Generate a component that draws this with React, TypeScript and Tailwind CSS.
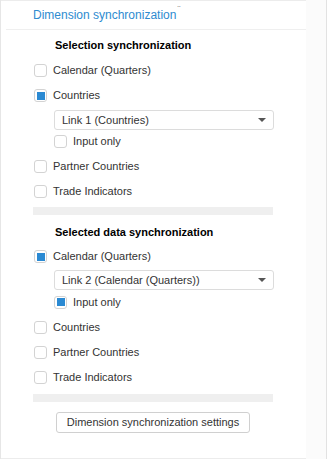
import React from "react";

const font = { fontFamily: '"Liberation Sans", Arial, sans-serif' };

function Box({ checked }: { checked?: boolean }) {
  return (
    <div className="w-[13px] h-[13px] shrink-0 rounded-[3px] border border-[#d3d3d3] bg-white flex items-center justify-center">
      {checked && <div className="w-[8px] h-[8px] bg-[#2b8ad3]" />}
    </div>
  );
}

function Row({ label, checked }: { label: string; checked?: boolean }) {
  return (
    <div className="h-[25px] flex items-center pl-[33px]">
      <Box checked={checked} />
      <span className="ml-[6px] text-[11px] text-[#333]">{label}</span>
    </div>
  );
}

function Select({ text }: { text: string }) {
  return (
    <div className="ml-[53px] w-[220px] h-[20px] border border-[#dcdcdc] rounded-[3px] flex items-center pl-[7px] pr-[7px] bg-white">
      <span className="flex-1 text-[11px] text-[#333]">{text}</span>
      <svg width="8" height="4" viewBox="0 0 8 4">
        <path d="M0 0 L8 0 L4 4 Z" fill="#555" />
      </svg>
    </div>
  );
}

function InputOnly({ checked }: { checked?: boolean }) {
  return (
    <div className="h-[20px] flex items-center pl-[53px]">
      <Box checked={checked} />
      <span className="ml-[6px] text-[11px] text-[#333]">Input only</span>
    </div>
  );
}

function Title({ text, h }: { text: string; h: string }) {
  return (
    <div className={`${h} flex items-center pl-[54px] text-[11px] font-bold text-black`}>
      {text}
    </div>
  );
}

export default function App() {
  return (
    <div className="w-[327px] h-[459px] flex bg-white" style={font}>
      <div className="w-[306px] h-[459px] border-l border-[#e6e6e6] flex flex-col">
        <div className="h-px bg-[#ececec]" />
        <div className="h-[28px] flex items-center pl-[32px] text-[12px] text-[#2e8bd0]">
          Dimension synchronization
          <span className="relative top-[-6px] ml-[1px] text-[9px] leading-none text-[#888]">¨</span>
        </div>
        <div className="ml-[5px] h-px bg-[#efefef]" />
        <div className="h-[3px]" />
        <Title text="Selection synchronization" h="h-[25px]" />
        <Row label="Calendar (Quarters)" />
        <Row label="Countries" checked />
        <div className="h-[2px]" />
        <Select text="Link 1 (Countries)" />
        <div className="h-[1px]" />
        <InputOnly />
        <div className="h-[3px]" />
        <Row label="Partner Countries" />
        <Row label="Trade Indicators" />
        <div className="h-[3px]" />
        <div className="ml-[32px] w-[240px] h-[8px] bg-[#efefef]" />
        <div className="h-[5px]" />
        <Title text="Selected data synchronization" h="h-[24px]" />
        <Row label="Calendar (Quarters)" checked />
        <div className="h-[1px]" />
        <Select text="Link 2 (Calendar (Quarters))" />
        <div className="h-[2px]" />
        <InputOnly checked />
        <div className="h-[3px]" />
        <Row label="Countries" />
        <Row label="Partner Countries" />
        <Row label="Trade Indicators" />
        <div className="h-[4px]" />
        <div className="ml-[32px] w-[240px] h-[8px] bg-[#efefef]" />
        <div className="h-[10px]" />
        <div className="ml-[55px] w-[194px] h-[21px] border border-[#d0d0d0] rounded-[3px] flex items-center justify-center text-[11px] text-[#333] bg-white">
          Dimension synchronization settings
        </div>
        <div className="flex-1" />
        <div className="h-px bg-[#ececec]" />
      </div>
      <div className="w-[20px] h-[459px] bg-[#fbfbfb]" />
      <div className="w-px h-[459px] bg-[#e2e2e2]" />
    </div>
  );
}
